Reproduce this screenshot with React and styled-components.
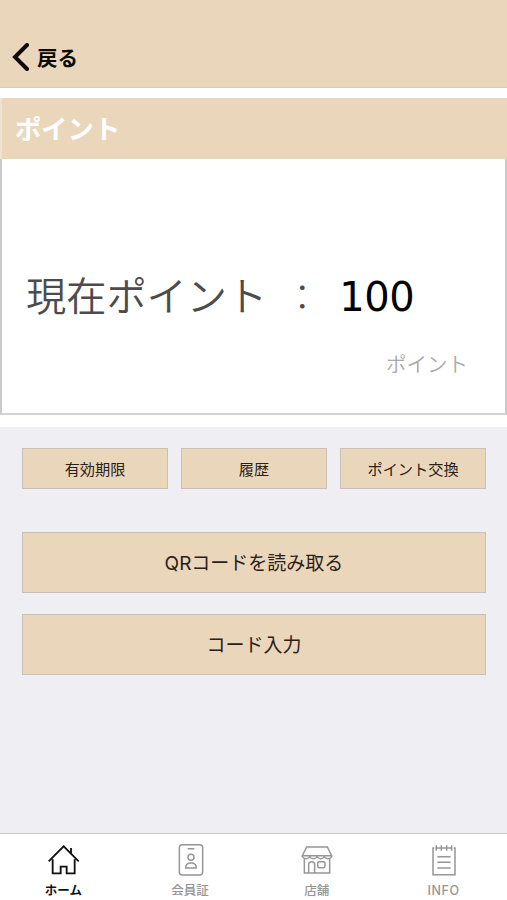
import React from 'react';
import styled, { createGlobalStyle } from 'styled-components'

const GlobalStyle = createGlobalStyle`
  *{
    box-sizing: border-box;
  }
  body{
    margin: 0;
    font-family: "Liberation Sans", "Noto Sans CJK JP", sans-serif;
  }
`
const Screen = styled.div`
  display: flex;
  flex-direction: column;
  height: 900px;
  background: #efeef3;
`
const Header = styled.header`
  display: flex;
  align-items: flex-end;
  height: 88px;
  padding: 0 0 14px 12px;
  background: #ead7bb;
  border-bottom: 1px solid #d3cdc8;
`
const BackButton = styled.button`
  display: flex;
  align-items: center;
  gap: 8px;
  height: 32px;
  padding: 0;
  border: 0;
  background: none;
  color: #0d0a07;
  font: 700 20.5px/32px "Noto Sans CJK JP", sans-serif;
`
const Panel = styled.section`
  height: 339px;
  padding: 10px 0 12px;
  background: #fff;
`
const Card = styled.div`
  display: flex;
  flex-direction: column;
  height: 317px;
  border: 2px solid #c9c9c9;
  border-width: 0 2px 2px;
  border-bottom-color: #d3d3d3;
`
const CardTitle = styled.h1`
  height: 61px;
  margin: 0 -2px;
  padding: 0 0 0 13px;
  border-left: 2px solid #eee2d2;
  background: #ead7bb;
  color: #fff;
  font: 700 26.3px/60px "Noto Sans CJK JP", sans-serif;
`
const Balance = styled.div`
  display: flex;
  align-items: baseline;
  height: 60px;
  margin-top: 105px;
  padding-left: 24px;
  color: #4c4c4c;
  font: 350 40.2px/60px "Noto Sans CJK JP", sans-serif;
`
const Colon = styled.span`
  width: 40px;
  margin-left: 17px;
  font-size: 36px;
  font-weight: 300;
`
const Amount = styled.span`
  margin-left: 15px;
  color: #000;
  font: 400 40px/60px "DejaVu Sans", sans-serif;
  letter-spacing: -0.4px;
`
const Unit = styled.div`
  margin-top: 24px;
  padding-right: 37px;
  color: #aaa;
  text-align: right;
  font: 350 20.5px/30px "Noto Sans CJK JP", sans-serif;
`
const Actions = styled.main`
  flex: 1;
  padding: 21px 21px 0 22px;
`
const SmallActions = styled.div`
  display: grid;
  grid-template-columns: repeat(3, 1fr);
  gap: 13px;
  margin-bottom: 43px;
`
const Button = styled.button`
  display: block;
  width: 100%;
  height: ${p => p.$small ? '41px' : '61px'};
  margin-bottom: ${p => p.$small ? '0' : '21px'};
  padding: 1px 0 0;
  border: 1px solid #c9c0b9;
  background: #ead7bb;
  color: #2b2118;
  font-family: Inter, "Noto Sans CJK JP", sans-serif;
  font-size: ${p => p.$small ? '15.2px' : '19px'};
  line-height: ${p => p.$small ? '39px' : '59px'};
`
const TabBar = styled.nav`
  display: grid;
  grid-template-columns: repeat(4, 1fr);
  height: 67px;
  border-top: 1px solid #c8c8ca;
  background: #fff;
`
const Tab = styled.div`
  display: flex;
  flex-direction: column;
  align-items: center;
  padding-top: 8px;
  color: ${p => p.$active ? '#111' : '#969696'};
  font: ${p => p.$active ? 700 : 500} 12.5px/26px Inter, "Noto Sans CJK JP", sans-serif;
`
const TabIcon = styled.svg`
  display: block;
  flex: none;
  width: 34px;
  height: 34px;
  fill: none;
  stroke: currentColor;
  stroke-width: ${p => p.$heavy ? 5.5 : 4.5};
`
const TabLabel = styled.span`
  height: 26px;
  margin-top: 1.5px;
  letter-spacing: ${p => p.$wide ? '0.6px' : '0'};
`

const HomeIcon = () => (
  <TabIcon viewBox="49 50 102 102" $heavy>
    <path d="M57 108 102 63l45 45M69 102v42h24v-20h18v20h24v-42M124 68v16" />
  </TabIcon>
)
const CardIcon = () => (
  <TabIcon viewBox="54 50 102 102">
    <rect x="73" y="58" width="70" height="91" rx="9" />
    <path d="M98 70h20M92 128q0-15 16-15t16 15z" />
    <circle cx="108" cy="96" r="9" />
  </TabIcon>
)
// awning with four scallops, then the door and the window
const ShopIcon = () => (
  <TabIcon viewBox="54 50 102 102">
    <path d="M74 65h62l13 26H61z" />
    <path d="M61 91a11 9 0 0 0 22 0a11 9 0 0 0 22 0a11 9 0 0 0 22 0a11 9 0 0 0 22 0" />
    <path d="M67 99v44h76V99M80 143v-25q0-9 9-9t9 9v25" />
    <rect x="107" y="109" width="22" height="18" rx="5" />
  </TabIcon>
)
const InfoIcon = () => (
  <TabIcon viewBox="56 50 102 102">
    <path d="M78 68h-4v80h66V68h-4M82 68h48" />
    <path d="M87 94h40M87 111h40M87 128h40" />
    <path d="M84 60v16M99 60v16M115 60v16M130 60v16" />
  </TabIcon>
)

const tabs = [
  { label: 'ホーム', icon: HomeIcon, active: true },
  { label: '会員証', icon: CardIcon },
  { label: '店舗', icon: ShopIcon },
  { label: 'INFO', icon: InfoIcon, wide: true },
]

const App = () => (
  <>
    <GlobalStyle />
    <Screen>
      <Header>
        <BackButton>
          <svg width="17" height="28" viewBox="0 0 17 28" fill="none" stroke="currentColor" strokeWidth="4" strokeLinecap="round">
            <path d="M15 2 3 14l12 12" />
          </svg>
          戻る
        </BackButton>
      </Header>
      <Panel>
        <Card>
          <CardTitle>ポイント</CardTitle>
          <Balance>
            現在ポイント
            <Colon>：</Colon>
            <Amount>100</Amount>
          </Balance>
          <Unit>ポイント</Unit>
        </Card>
      </Panel>
      <Actions>
        <SmallActions>
          <Button $small>有効期限</Button>
          <Button $small>履歴</Button>
          <Button $small>ポイント交換</Button>
        </SmallActions>
        <Button>QRコードを読み取る</Button>
        <Button>コード入力</Button>
      </Actions>
      <TabBar>
        {tabs.map(({ label, icon: Icon, active, wide }) => (
          <Tab key={label} $active={active}>
            <Icon />
            <TabLabel $wide={wide}>{label}</TabLabel>
          </Tab>
        ))}
      </TabBar>
    </Screen>
  </>
)

export default App;
